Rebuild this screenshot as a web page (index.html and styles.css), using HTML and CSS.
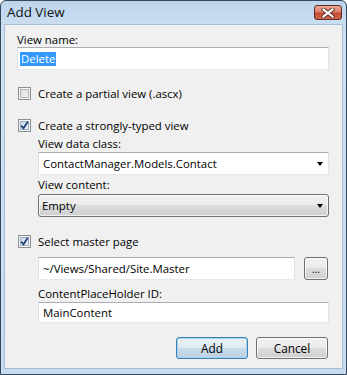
FILE: index.html
```html
<!DOCTYPE html>
<html>
<head>
<meta charset="utf-8">
<link rel="stylesheet" href="styles.css">
</head>
<body>
<div class="window">
  <div class="titlebar">
    <span class="title">Add View</span>
    <span class="close"><svg width="14" height="10" viewBox="0 0 14 10"><path d="M2.5 1.5 L11.5 8.5 M11.5 1.5 L2.5 8.5" stroke="#5a2a20" stroke-width="4" stroke-linecap="square"/><path d="M2.5 1.5 L11.5 8.5 M11.5 1.5 L2.5 8.5" stroke="#fff" stroke-width="2.2" stroke-linecap="square"/></svg></span>
  </div>
  <div class="client">
    <div class="label first">View name:</div>
    <div class="textbox wide"><span class="sel">Delete</span></div>

    <div class="check-row r1"><span class="cb"></span><span>Create a partial view (.ascx)</span></div>
    <div class="check-row r2"><span class="cb checked"><svg width="9" height="9" viewBox="0 0 9 9"><path d="M1.2 4.6 L3.5 7.3 L7.8 0.8" fill="none" stroke="#1f3f74" stroke-width="1.7"/></svg></span><span>Create a strongly-typed view</span></div>
    <div class="indent">
      <div class="label l-dc">View data class:</div>
      <div class="textbox combo"><span>ContactManager.Models.Contact</span><span class="arrow"></span></div>
      <div class="label l-vc">View content:</div>
      <div class="dropdown"><span>Empty</span><span class="arrow"></span></div>
    </div>

    <div class="check-row r3"><span class="cb checked"><svg width="9" height="9" viewBox="0 0 9 9"><path d="M1.2 4.6 L3.5 7.3 L7.8 0.8" fill="none" stroke="#1f3f74" stroke-width="1.7"/></svg></span><span>Select master page</span></div>
    <div class="indent">
      <div class="master-row">
        <div class="textbox master"><span>~/Views/Shared/Site.Master</span></div>
        <div class="btn dots">...</div>
      </div>
      <div class="label l-cp">ContentPlaceHolder ID:</div>
      <div class="textbox short"><span>MainContent</span></div>
    </div>

    <div class="buttons">
      <div class="btn default">Add</div>
      <div class="btn cancel">Cancel</div>
    </div>
  </div>
</div>
</body>
</html>
```

FILE: styles.css
```css
* { box-sizing: border-box; }
html, body { margin: 0; padding: 0; background: #ffffff; }
body {
  font-family: "Open Sans", "Noto Sans", sans-serif;
  font-size: 11.4px;
  color: #000;
}
.window {
  width: 347px;
  height: 375px;
  border: 1px solid #34475c;
  border-radius: 6px 6px 0 0;
  background: linear-gradient(#bcd4ec, #cfe0f2 30px, #c8dcf0);
  padding: 0 3px 5px 3px;
  display: flex;
  flex-direction: column;
}
.titlebar {
  height: 23px;
  display: flex;
  justify-content: space-between;
  align-items: flex-start;
  flex: none;
}
.title {
  font-size: 13.4px;
  color: #111;
  margin: 2px 0 0 3px;
  line-height: 18px;
}
.close {
  width: 28px;
  height: 15px;
  margin: 4px 1px 0 0;
  border: 1px solid #5f2a20;
  border-radius: 3px;
  background: linear-gradient(#e9aa9b, #d97f6b 45%, #c44a30 55%, #d06a52);
  display: flex;
  align-items: center;
  justify-content: center;
}
.close svg { display: block; }
.client {
  flex: 1;
  background: #f0f0f0;
  border: 1px solid #a9bdd2;
  padding: 7px 13px 0 12px;
  display: flex;
  flex-direction: column;
}
.label {
  line-height: 15px;
  height: 15px;
  color: #000;
}
.textbox {
  background: #fff;
  border: 1px solid #abadb3;
  border-color: #abadb3 #e2e3ea #e3e9ef #dbdfe6;
  height: 23px;
  display: flex;
  align-items: center;
  padding-left: 4px;
  line-height: 15px;
}
.wide { padding-left: 2px; }
.sel {
  background: #3399ff;
  color: #fff;
  padding: 0 1px;
  line-height: 14px;
}
.check-row {
  display: flex;
  align-items: center;
  height: 15px;
  line-height: 15px;
  margin-left: 1px;
}
.cb {
  width: 13px;
  height: 13px;
  border: 1px solid #8e8f8f;
  background: #f4f4f4;
  box-shadow: inset 0 0 0 1px #f4f4f4, inset 0 0 0 2px #b4b4b4;
  background-image: linear-gradient(135deg, #d8d8d8, #f8f8f8);
  margin-right: 7px;
  display: flex;
  align-items: center;
  justify-content: center;
  flex: none;
}
.cb.checked {
  background-image: linear-gradient(135deg, #c9d4e2, #f3f6fa);
  box-shadow: inset 0 0 0 1px #f4f4f4, inset 0 0 0 2px #9fb0c6;
}
.cb svg { display: block; }
.r1 { margin-top: 16px; }
.r2 { margin-top: 17px; }
.r3 { margin-top: 17px; }
.indent {
  margin-left: 21px;
  display: flex;
  flex-direction: column;
}
.l-dc { margin-top: 3px; }
.combo { margin-top: 1px; justify-content: space-between; padding-right: 5px; }
.arrow {
  width: 0; height: 0;
  border-left: 3.5px solid transparent;
  border-right: 3.5px solid transparent;
  border-top: 4px solid #000;
}
.l-vc { margin-top: 2px; }
.dropdown {
  margin-top: 2px;
  height: 23px;
  border: 1px solid #707070;
  border-radius: 3px;
  background: linear-gradient(#f2f2f2, #ebebeb 50%, #dddddd 50%, #cfcfcf);
  box-shadow: inset 0 0 0 1px rgba(255,255,255,0.7);
  display: flex;
  align-items: center;
  justify-content: space-between;
  padding: 0 5px 0 3px;
}
.master-row {
  margin-top: 8px;
  display: flex;
  justify-content: space-between;
  align-items: flex-start;
}
.master { width: 257px; }
.btn {
  border: 1px solid #707070;
  border-radius: 3px;
  background: linear-gradient(#f2f2f2, #ebebeb 50%, #dddddd 50%, #cfcfcf);
  box-shadow: inset 0 0 0 1px rgba(255,255,255,0.75);
  display: flex;
  align-items: center;
  justify-content: center;
  color: #000;
}
.dots {
  width: 24px;
  height: 23px;
  margin-right: 1px;
  font-size: 10px;
  padding-top: 1px;
}
.l-cp { margin-top: 6px; }
.short { margin-top: 1px; height: 21px; }
.buttons {
  margin-top: 14px;
  display: flex;
  justify-content: flex-end;
  gap: 8px;
  padding-right: 1px;
}
.buttons .btn {
  height: 22px;
  width: 72px;
  font-size: 11.8px;
}
.default {
  border-color: #3c7fb1 !important;
  background: linear-gradient(#e9f2f8, #dfeaf3 50%, #c9dce9 50%, #bcd2e2) !important;
  box-shadow: inset 0 0 0 1px #a8d4ef !important;
}
```
